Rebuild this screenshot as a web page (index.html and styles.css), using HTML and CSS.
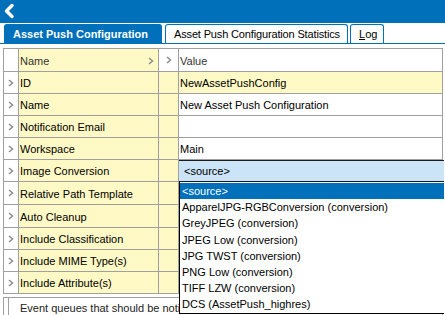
FILE: index.html
```html
<!DOCTYPE html>
<html>
<head>
<meta charset="utf-8">
<link rel="stylesheet" href="styles.css">
</head>
<body>
<div class="app">
  <div class="topbar">
    <svg class="back" width="12" height="16" viewBox="0 0 12 16"><path d="M9 2.5 L3.5 8 L9 13.5" fill="none" stroke="#fff" stroke-width="3.4" stroke-linecap="round" stroke-linejoin="round"/></svg>
  </div>
  <div class="tabs">
    <div class="tab active t1">Asset Push Configuration</div>
    <div class="tab t2">Asset Push Configuration Statistics</div>
    <div class="tab t3"><u>L</u>og</div>
  </div>
  <div class="panel">
    <div class="grid">
      <div class="row head">
        <div class="c exp"></div>
        <div class="c name">Name<svg class="chev" width="6" height="8" viewBox="0 0 6 8"><path d="M1 1 L4.5 4 L1 7" fill="none" stroke="#8c8c8c" stroke-width="1.5"/></svg></div>
        <div class="c mid"><svg class="chev" width="6" height="8" viewBox="0 0 6 8"><path d="M1 1 L4.5 4 L1 7" fill="none" stroke="#8c8c8c" stroke-width="1.5"/></svg></div>
        <div class="c val">Value</div>
      </div>
      <div class="row"><div class="c exp"><svg class="chev" width="6" height="8" viewBox="0 0 6 8"><path d="M1 1 L4.5 4 L1 7" fill="none" stroke="#8c8c8c" stroke-width="1.5"/></svg></div><div class="c name">ID</div><div class="c mid"></div><div class="c val ro">NewAssetPushConfig</div></div>
      <div class="row"><div class="c exp"><svg class="chev" width="6" height="8" viewBox="0 0 6 8"><path d="M1 1 L4.5 4 L1 7" fill="none" stroke="#8c8c8c" stroke-width="1.5"/></svg></div><div class="c name">Name</div><div class="c mid"></div><div class="c val">New Asset Push Configuration</div></div>
      <div class="row"><div class="c exp"><svg class="chev" width="6" height="8" viewBox="0 0 6 8"><path d="M1 1 L4.5 4 L1 7" fill="none" stroke="#8c8c8c" stroke-width="1.5"/></svg></div><div class="c name">Notification Email</div><div class="c mid"></div><div class="c val"></div></div>
      <div class="row"><div class="c exp"><svg class="chev" width="6" height="8" viewBox="0 0 6 8"><path d="M1 1 L4.5 4 L1 7" fill="none" stroke="#8c8c8c" stroke-width="1.5"/></svg></div><div class="c name">Workspace</div><div class="c mid"></div><div class="c val">Main</div></div>
      <div class="row"><div class="c exp"><svg class="chev" width="6" height="8" viewBox="0 0 6 8"><path d="M1 1 L4.5 4 L1 7" fill="none" stroke="#8c8c8c" stroke-width="1.5"/></svg></div><div class="c name">Image Conversion</div><div class="c mid"></div><div class="c val"></div></div>
      <div class="row tall"><div class="c exp"><svg class="chev" width="6" height="8" viewBox="0 0 6 8"><path d="M1 1 L4.5 4 L1 7" fill="none" stroke="#8c8c8c" stroke-width="1.5"/></svg></div><div class="c name">Relative Path Template</div><div class="c mid"></div><div class="c val"></div></div>
      <div class="row tall"><div class="c exp"><svg class="chev" width="6" height="8" viewBox="0 0 6 8"><path d="M1 1 L4.5 4 L1 7" fill="none" stroke="#8c8c8c" stroke-width="1.5"/></svg></div><div class="c name">Auto Cleanup</div><div class="c mid"></div><div class="c val"></div></div>
      <div class="row"><div class="c exp"><svg class="chev" width="6" height="8" viewBox="0 0 6 8"><path d="M1 1 L4.5 4 L1 7" fill="none" stroke="#8c8c8c" stroke-width="1.5"/></svg></div><div class="c name">Include Classification</div><div class="c mid"></div><div class="c val"></div></div>
      <div class="row"><div class="c exp"><svg class="chev" width="6" height="8" viewBox="0 0 6 8"><path d="M1 1 L4.5 4 L1 7" fill="none" stroke="#8c8c8c" stroke-width="1.5"/></svg></div><div class="c name">Include MIME Type(s)</div><div class="c mid"></div><div class="c val"></div></div>
      <div class="row"><div class="c exp"><svg class="chev" width="6" height="8" viewBox="0 0 6 8"><path d="M1 1 L4.5 4 L1 7" fill="none" stroke="#8c8c8c" stroke-width="1.5"/></svg></div><div class="c name">Include Attribute(s)</div><div class="c mid"></div><div class="c val"></div></div>
    </div>
    <div class="desc">
      <div class="desc-gap"></div>
      <div class="desc-text">Event queues that should be notified</div>
    </div>
    <div class="combo">
      <div class="combo-box">&lt;source&gt;</div>
      <div class="list">
        <div class="item sel">&lt;source&gt;</div>
        <div class="item">ApparelJPG-RGBConversion (conversion)</div>
        <div class="item">GreyJPEG (conversion)</div>
        <div class="item">JPEG Low (conversion)</div>
        <div class="item">JPG TWST (conversion)</div>
        <div class="item">PNG Low (conversion)</div>
        <div class="item">TIFF LZW (conversion)</div>
        <div class="item">DCS (AssetPush_highres)</div>
      </div>
    </div>
  </div>
</div>
</body>
</html>
```
FILE: styles.css
```css
html, body {
  margin: 0;
  padding: 0;
  background: #fff;
}
body {
  font-family: "Liberation Sans", Arial, sans-serif;
  font-size: 11px;
  color: #000;
  width: 445px;
  height: 315px;
  overflow: hidden;
}
.app {
  display: flex;
  flex-direction: column;
  height: 315px;
}
.topbar {
  flex-shrink: 0;
  height: 23px;
  background: #0070ba;
  display: flex;
  align-items: center;
  padding-left: 3px;
}
.back { display: block; margin-top: -1px; }
.tabs {
  flex-shrink: 0;
  display: flex;
  align-items: flex-end;
  gap: 3px;
  height: 19px;
  padding-left: 4px;
  border-bottom: 1px solid #0070ba;
  margin-top: 1px;
}
.tab {
  flex-shrink: 0;
  height: 19px;
  box-sizing: border-box;
  border: 1px solid #0070ba;
  border-bottom: none;
  border-radius: 3px 3px 0 0;
  padding: 0 0 0 8px;
  display: flex;
  align-items: center;
  white-space: nowrap;
  overflow: hidden;
}
.t1 { width: 158px; }
.t2 { width: 183px; letter-spacing: -0.15px; }
.t3 { width: 34px; margin-left: -1px; }
.tab.active {
  background: #0070ba;
  color: #fff;
  font-weight: bold;
}
.panel {
  position: relative;
  flex: 1 0 auto;
  margin-top: 4px;
  margin-left: 3px;
  margin-right: 2px;
  border-top: 1px solid #a0a0a0;
  border-right: 1px solid #a0a0a0;
}
.grid {
  display: flex;
  flex-direction: column;
  border-left: 1px solid #a0a0a0;
}
.row {
  flex-shrink: 0;
  display: grid;
  grid-template-columns: 15px 140px 20px 1fr;
  height: 22px;
  border-bottom: 1px solid #a0a0a0;
  box-sizing: border-box;
}
.row.head, .row.tall { height: 23px; }
.c {
  border-right: 1px solid #a0a0a0;
  display: flex;
  align-items: center;
  white-space: nowrap;
  overflow: hidden;
  padding-left: 1px;
  padding-top: 1px;
}
.c:last-child { border-right: none; }
.exp { justify-content: center; padding: 0; }
.name, .mid { background: #fff9c6; }
.head .name { justify-content: space-between; padding-right: 4px; color: #333; }
.head .mid { background: #fff; justify-content: center; padding: 0; }
.head .val { color: #333; }
.val.ro { background: #fff9c6; }
.chev { display: block; }
.desc {
  display: flex;
  margin-top: 3px;
  height: 20px;
  border-top: 1px solid #a0a0a0;
  border-left: 1px solid #a0a0a0;
}
.desc-gap {
  width: 4px;
  border-right: 1px solid #a0a0a0;
}
.desc-text {
  width: 159px;
  padding-left: 11px;
  padding-top: 4px;
  color: #222;
  white-space: nowrap;
  overflow: hidden;
}
.combo {
  position: absolute;
  left: 176px;
  top: 111px;
  right: -2px;
}
.combo-box {
  height: 20px;
  background: #cce4f7;
  border-top: 1px solid #1a1a1a;
  border-bottom: 1px solid #1a1a1a;
  display: flex;
  align-items: center;
  padding-left: 5px;
}
.list {
  background: #fff;
  border-left: 1px solid #000;
  border-bottom: 1px solid #000;
  padding-top: 1px;
}
.item {
  height: 16.2px;
  line-height: 16px;
  padding-left: 2px;
  white-space: nowrap;
}
.item.sel {
  background: #0070ba;
  color: #fff;
}
```
